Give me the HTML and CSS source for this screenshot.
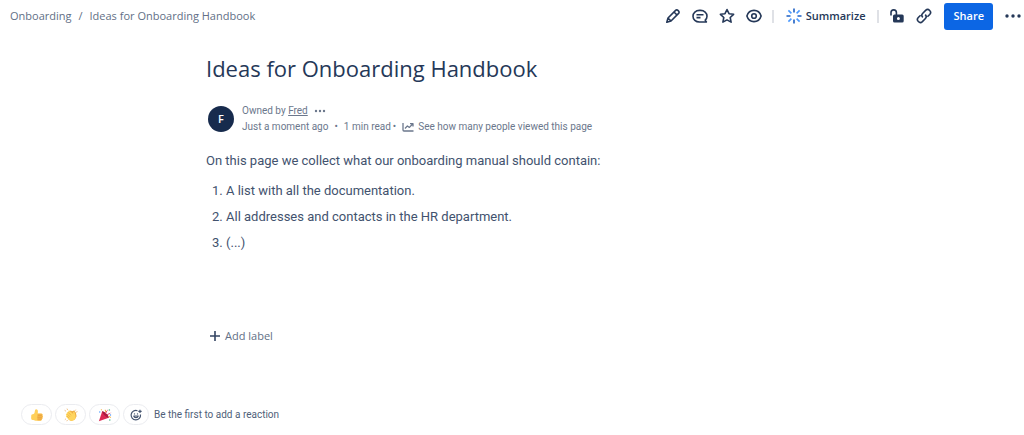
FILE: index.html
```html
<!DOCTYPE html>
<html lang="en">
<head>
<meta charset="utf-8">
<meta name="viewport" content="width=device-width, initial-scale=1">
<title>Ideas for Onboarding Handbook</title>
<link rel="stylesheet" href="styles.css">
</head>
<body>
<header class="topbar">
  <nav class="breadcrumbs" aria-label="Breadcrumbs">
    <a href="#">Onboarding</a>
    <span class="slash">/</span>
    <a href="#">Ideas for Onboarding Handbook</a>
  </nav>
  <div class="actions">
    <div class="tools">
      <button class="icon-button" aria-label="Edit"><svg viewBox="0 0 16 16"><path d="M1.800 14.200l1.200-4.200 7.600-7.600a1.600 1.600 0 0 1 2.300 0l.7.7a1.600 1.600 0 0 1 0 2.300L6 13z M9 4l3 3 M3.200 10.200l2.600 2.600"/></svg></button>
      <button class="icon-button" aria-label="Comments"><svg viewBox="0 0 16 16"><path d="M14.400 14H7.400C3.800 14 1 11.500 1 8.200s2.800-5.800 6.400-5.800h1.200c3.600 0 6.400 2.500 6.400 5.800 0 1.600-.7 2.900-1.800 3.900z M4.500 6.700h7 M4.500 9.600h4"/></svg></button>
      <button class="icon-button" aria-label="Star"><svg viewBox="0 0 16 16"><path d="M8 1.500l2 4.200 4.600.6-3.400 3.200.9 4.600L8 11.900l-4.100 2.200.9-4.600-3.400-3.200 4.600-.6z"/></svg></button>
      <button class="icon-button" aria-label="Watch"><svg viewBox="0 0 16 16"><path d="M.9 8C2 4.400 4.600 2.400 8 2.400S14 4.400 15.100 8C14 11.600 11.400 13.600 8 13.600S2 11.600.9 8z"/><circle cx="8" cy="8" r="2.300"/></svg></button>
    </div>
    <span class="divider"></span>
    <button class="summarize"><svg viewBox="0 0 16 16"><path class="ray-dark" d="M8 .5v4 M8 11.500v4 M.5 8h4 M11.500 8h4"/><path class="ray-light" d="M2.400 2.400l3 3 M10.600 10.600l3 3 M2.400 13.600l3-3 M10.600 5.400l3-3"/></svg>Summarize</button>
    <span class="divider"></span>
    <div class="tools">
      <button class="icon-button" aria-label="Restrictions"><svg viewBox="0 0 16 16"><path d="M2 7.500V4.600a2.700 2.700 0 0 1 5.400 0V7"/><path class="solid" fill-rule="evenodd" d="M5.500 6.500h7.700a1.500 1.500 0 0 1 1.500 1.500v5a1.500 1.500 0 0 1-1.500 1.500H5.500A1.500 1.500 0 0 1 4 13V8a1.500 1.500 0 0 1 1.500-1.500z M9.400 9a1.500 1.500 0 1 0 0 3 1.500 1.500 0 0 0 0-3z"/></svg></button>
      <button class="icon-button" aria-label="Copy link"><svg viewBox="0 0 16 16"><path d="M6.800 9.400a3 3 0 0 1 0-4.200l2.800-2.800a2.900 2.900 0 0 1 4.100 4.100l-2.300 2.300 M9.200 6.600a3 3 0 0 1 0 4.200l-2.800 2.800a2.900 2.900 0 0 1-4.100-4.100l2.300-2.300"/></svg></button>
    </div>
    <button class="share">Share</button>
    <button class="icon-button" aria-label="More actions"><svg viewBox="0 0 16 16"><g class="solid"><circle cx="2" cy="8" r="1.700"/><circle cx="8" cy="8" r="1.700"/><circle cx="14" cy="8" r="1.700"/></g></svg></button>
  </div>
</header>
<main class="page">
  <h1>Ideas for Onboarding Handbook</h1>
  <div class="byline">
    <span class="avatar">F</span>
    <div class="meta">
      <div class="meta-row">
        <span>Owned by <a class="owner" href="#">Fred</a></span>
        <button class="more" aria-label="More details"><svg viewBox="0 0 12 4"><circle cx="2" cy="2" r="1.200"/><circle cx="6" cy="2" r="1.200"/><circle cx="10" cy="2" r="1.200"/></svg></button>
      </div>
      <div class="meta-row">
        <a href="#">Just a moment ago</a>
        <span>•</span>
        <span class="read-time">1 min read</span>
        <span class="dot">•</span>
        <a class="views" href="#"><svg viewBox="0 0 12 12"><path d="M1 2v7a1 1 0 0 0 1 1h9.500 M3 7.500l2.400-2.600L7.400 6.400 10.600 3 M8 2.700h3v2.800"/></svg>See how many people viewed this page</a>
      </div>
    </div>
  </div>
  <div class="content">
    <p>On this page we collect what our onboarding manual should contain:</p>
    <ol>
      <li>A list with all the documentation.</li>
      <li>All addresses and contacts in the HR department.</li>
      <li>(...)</li>
    </ol>
  </div>
  <button class="add-label"><svg viewBox="0 0 12 12"><path d="M6 1v10 M1 6h10"/></svg>Add label</button>
</main>
<footer class="reactions">
  <button class="reaction" aria-label="Thumbs up"><svg viewBox="0 0 16 16"><path fill="#ffd05a" d="M1.500 8c.6-.9 2.500-.7 3.300-1.700C5.700 5 5.300 2.300 6.300 1.600c1.200-.8 2.600.2 2.700 1.800L8.900 6.300h3.900c1.600 0 1.900 1.700 1.200 2.300.9.700.8 1.900 0 2.300.5.900.2 1.700-.6 2 .1 1-.5 1.600-1.400 1.600H6.500c-1.600 0-2-.8-3.500-.8-1.200 0-1.700-.8-1.700-2.500z"/><path fill="#f5b54a" d="M9.300 6.600h3.500c1.500 0 1.800 1.400 1.200 2 .8.7.7 1.900 0 2.300.4.900.1 1.700-.6 2 0 1-.5 1.500-1.400 1.500H9.200c-1.300-.2-1.300-1.700-.5-2-1-.5-1-1.800-.1-2.100-.8-.8-.5-1.900.2-2.100-.6-.8-.2-1.500.5-1.600z"/><path class="finger" d="M9 8.500h4.500 M9 10.700h4.600 M9.300 12.700h3.600"/></svg></button>
  <button class="reaction" aria-label="Clap"><svg viewBox="0 0 16 16"><path fill="#efad42" d="M4.200 4.800l3.600-2 1.300 1 2.400-.9 2 2.100.9 4.500-2 3.700-4 1.600-3-1.500z"/><path fill="#ffd55f" d="M3.500 5.200c.7-.7 1.500-.3 2 .2L5 3.500c.8-.9 1.600-.5 2 .2l3.500 3.200-.1-2c.2-.9 1.500-.8 1.800.2l1 3.900c.5 2.700-.8 5.100-3.600 5.500-1.900.3-3.100-.4-4.300-1.500L2.400 10c-.6-.7.1-1.600.9-1.200l-1-1.200c-.5-.8.4-1.500 1.200-.9l.1.100c-.7-.7-.5-1.200-.1-1.600z"/><path class="clap-lines" d="M4 7.200l2.900 2.900 M5.300 5.500L8 8.300 M3.500 9.200l2.300 2.200"/><path class="sparks" d="M2 3.500L.8 2.700 M4 2l-.5-1.200 M12.500 3l.8-1 M14 4.700l1.300-.5 M2 12.500l-1 .8 M3.800 14l-.6 1"/></svg></button>
  <button class="reaction" aria-label="Celebrate"><svg viewBox="0 0 16 16"><path fill="#dc2953" d="M1 15.200L4.800 3.800c3 1 6.500 4.300 7.500 7.300z"/><path fill="#a51b40" d="M4.800 3.800c2-.5 8 5 7.500 7.300-2.200.4-7.800-5-7.500-7.300z"/><path class="confetti-red" d="M8 6.500c2-.5 1-3 3-4 M10 8c1.500-1.500 3.500-1 4.300-2.500"/><path class="confetti-gold" d="M3.500 2.500l.8-.8 M8.800 4.400l-.5-2.400 M12.500 9.500l2.200 1.500"/><circle cx="2" cy="4.500" r=".8" fill="#4c9aff"/><circle cx="13" cy="2.300" r=".9" fill="#4db58b"/><circle cx="14.300" cy="8" r=".8" fill="#4c9aff"/><circle cx="13.500" cy="13.700" r=".9" fill="#4db58b"/></svg></button>
  <button class="reaction reaction-add" aria-label="Add reaction"><svg viewBox="0 0 16 16"><path d="M10 2.300A6.300 6.300 0 1 0 14 7.300 M5 9.300c.8 3 5.200 3 6 0z M13.300 1v4.400 M11.100 3.200h4.400"/><g class="solid"><circle cx="6" cy="6.500" r=".9"/><circle cx="10" cy="6.500" r=".9"/></g></svg></button>
  <span class="hint">Be the first to add a reaction</span>
</footer>
</body>
</html>
```
FILE: styles.css
```css
* { box-sizing: border-box; }
body {
  margin: 0;
  background: #fff;
  color: #344563;
  font: 14px/20px "Open Sans", "Noto Sans", sans-serif;
}
a { color: inherit; text-decoration: none; }
button {
  display: flex;
  align-items: center;
  justify-content: center;
  margin: 0;
  padding: 0;
  border: 0;
  background: none;
  color: inherit;
  font: inherit;
  cursor: pointer;
}
svg {
  display: block;
  flex: none;
  width: 16px;
  height: 16px;
  fill: none;
  stroke: currentColor;
  stroke-width: 1.6;
  stroke-linejoin: round;
}
.solid { fill: currentColor; stroke: none; }

.topbar {
  display: flex;
  align-items: center;
  justify-content: space-between;
  height: 32px;
  padding: 0 3px 0 10px;
}
.breadcrumbs {
  display: flex;
  gap: 7px;
  color: #626f86;
  font-size: 11px;
}
.actions {
  display: flex;
  align-items: center;
  gap: 12px;
  color: #253858;
}
.tools { display: flex; gap: 11px; }
.divider { width: 2px; height: 13px; background: #dfe1e6; }
.divider + .tools,
.tools + .divider { margin-left: -2px; }
.summarize { gap: 4px; font-size: 11px; font-weight: 600; }
.ray-dark { stroke: #1d5fc4; }
.ray-light { stroke: #4c9aff; }
.share {
  height: 27px;
  padding: 0 9px;
  border-radius: 3px;
  background: #0c66e4;
  color: #fff;
  font-size: 11px;
  font-weight: 600;
}

.page {
  max-width: 612px;
  margin: 0 auto;
  padding-top: 20px;
}
h1 {
  margin: 0;
  color: #253858;
  font-size: 22px;
  font-weight: 400;
  line-height: 32px;
}
.byline {
  display: flex;
  align-items: center;
  gap: 8px;
  margin-top: 19px;
  padding-left: 2px;
}
.avatar {
  display: grid;
  place-items: center;
  width: 26px;
  height: 26px;
  border-radius: 50%;
  background: #172b4d;
  color: #fff;
  font-size: 11px;
  font-weight: 600;
}
.meta, .content, .hint { font-family: Roboto, "Open Sans", sans-serif; }
.meta { color: #6b778c; font-size: 10px; line-height: 16px; }
.meta-row { display: flex; align-items: center; gap: 6px; }
.owner { text-decoration: underline; }
.more svg { width: 12px; height: 4px; fill: currentColor; stroke: none; }
.dot { margin-left: -4px; }
.views { display: flex; align-items: center; gap: 4px; }
.views svg { width: 12px; height: 12px; stroke-width: 1.3; }

.content { margin-top: 16px; color: #42526e; font-size: 13px; }
.content p { margin: 0; }
.content ol { margin: 10px 0 0; padding-left: 20px; }
.content li + li { margin-top: 6px; }

.add-label {
  gap: 4px;
  margin-top: 73px;
  padding-left: 3px;
  color: #626f86;
  font-size: 11px;
}
.add-label svg { width: 12px; height: 12px; color: #344563; }

.reactions {
  display: flex;
  align-items: center;
  gap: 3px;
  padding: 58px 21px 10px;
}
.reaction {
  width: 31px;
  height: 21px;
  border: 1px solid #ebecf0;
  border-radius: 11px;
}
.reaction svg { width: 14px; height: 14px; stroke: none; }
.reaction-add { width: 26px; color: #44546f; }
.reaction-add svg { width: 12px; height: 12px; stroke: currentColor; }
.finger { stroke: #e39c37; stroke-width: 0.6; }
.clap-lines { stroke: #e5a63c; stroke-width: 0.7; }
.sparks { stroke: #e8a14a; stroke-width: 1; }
.confetti-red { stroke: #dc2953; stroke-width: 1; }
.confetti-gold { stroke: #f5b54a; stroke-width: 1.3; }
.hint { padding-left: 2px; color: #505f79; font-size: 10px; }
```
